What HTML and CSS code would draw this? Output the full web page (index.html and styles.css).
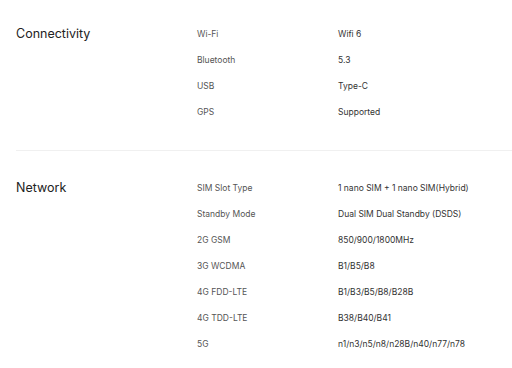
FILE: index.html
```html
<!DOCTYPE html>
<html lang="en">
<head>
    <meta charset="UTF-8">
    <meta name="viewport" content="width=device-width, initial-scale=1.0">
    <title>Specifications</title>
    <link rel="stylesheet" href="styles.css">
</head>
<body>
<main class="specs">
    <section class="spec-group">
        <h2 class="spec-title">Connectivity</h2>
        <dl class="spec-list">
            <div class="spec-row"><dt>Wi-Fi</dt><dd>Wifi 6</dd></div>
            <div class="spec-row"><dt>Bluetooth</dt><dd>5.3</dd></div>
            <div class="spec-row"><dt>USB</dt><dd>Type-C</dd></div>
            <div class="spec-row"><dt>GPS</dt><dd>Supported</dd></div>
        </dl>
    </section>

    <section class="spec-group">
        <h2 class="spec-title">Network</h2>
        <dl class="spec-list">
            <div class="spec-row"><dt>SIM Slot Type</dt><dd>1 nano SIM + 1 nano SIM(Hybrid)</dd></div>
            <div class="spec-row"><dt>Standby Mode</dt><dd>Dual SIM Dual Standby (DSDS)</dd></div>
            <div class="spec-row"><dt>2G GSM</dt><dd>850/900/1800MHz</dd></div>
            <div class="spec-row"><dt>3G WCDMA</dt><dd>B1/B5/B8</dd></div>
            <div class="spec-row"><dt>4G FDD-LTE</dt><dd>B1/B3/B5/B8/B28B</dd></div>
            <div class="spec-row"><dt>4G TDD-LTE</dt><dd>B38/B40/B41</dd></div>
            <div class="spec-row"><dt>5G</dt><dd>n1/n3/n5/n8/n28B/n40/n77/n78</dd></div>
        </dl>
    </section>
</main>
</body>
</html>
```

FILE: styles.css
```css
* {
    margin: 0;
    padding: 0;
    box-sizing: border-box;
}

body {
    font-family: Inter, "Noto Sans", sans-serif;
    background-color: #fff;
    color: #222;
}

.specs {
    padding-left: 16px;
}

.spec-group {
    display: grid;
    grid-template-columns: 181px 1fr;
    padding: 21px 0 25px;
}

.spec-group + .spec-group {
    border-top: 1px solid #f0f0f0;
    padding-top: 24px;
}

.spec-title {
    font-size: 12.5px;
    font-weight: 400;
    line-height: 26px;
    color: #222;
}

.spec-row {
    display: grid;
    grid-template-columns: 141px 1fr;
    height: 26px;
    align-items: center;
    font-size: 8.5px;
}

.spec-row dt {
    color: #555;
}

.spec-row dd {
    color: #333;
}
```
